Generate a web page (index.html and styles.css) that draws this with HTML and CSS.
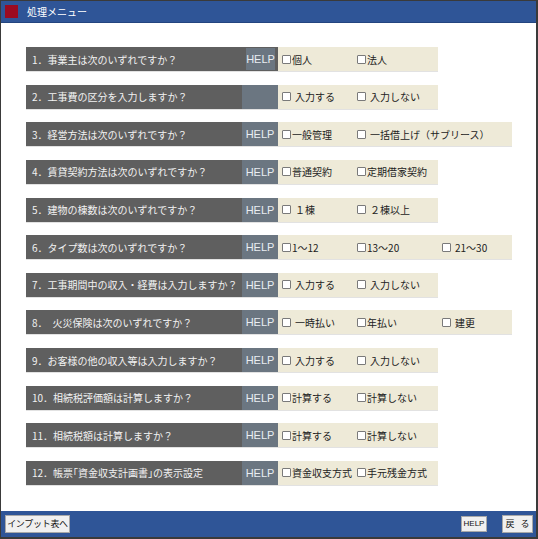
FILE: index.html
```html
<!DOCTYPE html>
<html lang="ja">
<head>
<meta charset="utf-8">
<title>処理メニュー</title>
<link rel="stylesheet" href="styles.css">
</head>
<body>
<div class="window">
  <div class="titlebar"><span class="logo"></span><span class="title">処理メニュー</span></div>
  <div class="content">
    <div class="row"><div class="label">1．事業主は次のいずれですか？</div><div class="help help-dark"><span class="help-btn">HELP</span></div><div class="opts"><span class="opt o1"><i class="cb"></i>個人</span><span class="opt o2"><i class="cb"></i>法人</span></div></div>
    <div class="row"><div class="label">2．工事費の区分を入力しますか？</div><div class="help"></div><div class="opts"><span class="opt o1"><i class="cb sp"></i>入力する</span><span class="opt o2"><i class="cb sp"></i>入力しない</span></div></div>
    <div class="row"><div class="label">3．経営方法は次のいずれですか？</div><div class="help">HELP</div><div class="opts wide"><span class="opt o1"><i class="cb"></i>一般管理</span><span class="opt"><i class="cb sp"></i>一括借上げ（サブリース）</span></div></div>
    <div class="row"><div class="label">4．賃貸契約方法は次のいずれですか？</div><div class="help">HELP</div><div class="opts"><span class="opt o1"><i class="cb"></i>普通契約</span><span class="opt o2"><i class="cb"></i>定期借家契約</span></div></div>
    <div class="row"><div class="label">5．建物の棟数は次のいずれですか？</div><div class="help">HELP</div><div class="opts"><span class="opt o1"><i class="cb sp"></i>１棟</span><span class="opt o2"><i class="cb sp"></i>２棟以上</span></div></div>
    <div class="row"><div class="label">6．タイプ数は次のいずれですか？</div><div class="help">HELP</div><div class="opts wide"><span class="opt o1"><i class="cb"></i>1～12</span><span class="opt o2"><i class="cb"></i>13～20</span><span class="opt"><i class="cb sp"></i>21～30</span></div></div>
    <div class="row"><div class="label">7．工事期間中の収入・経費は入力しますか？</div><div class="help">HELP</div><div class="opts"><span class="opt o1"><i class="cb sp"></i>入力する</span><span class="opt o2"><i class="cb sp"></i>入力しない</span></div></div>
    <div class="row"><div class="label">8．　火災保険は次のいずれですか？</div><div class="help">HELP</div><div class="opts wide"><span class="opt o1"><i class="cb sp"></i>一時払い</span><span class="opt o2"><i class="cb"></i>年払い</span><span class="opt"><i class="cb sp"></i>建更</span></div></div>
    <div class="row"><div class="label">9．お客様の他の収入等は入力しますか？</div><div class="help">HELP</div><div class="opts"><span class="opt o1"><i class="cb sp"></i>入力する</span><span class="opt o2"><i class="cb sp"></i>入力しない</span></div></div>
    <div class="row"><div class="label">10．相続税評価額は計算しますか？</div><div class="help">HELP</div><div class="opts"><span class="opt o1"><i class="cb"></i>計算する</span><span class="opt o2"><i class="cb"></i>計算しない</span></div></div>
    <div class="row"><div class="label">11．相続税額は計算しますか？</div><div class="help">HELP</div><div class="opts"><span class="opt o1"><i class="cb"></i>計算する</span><span class="opt o2"><i class="cb"></i>計算しない</span></div></div>
    <div class="row"><div class="label">12．帳票｢資金収支計画書｣の表示設定</div><div class="help">HELP</div><div class="opts"><span class="opt o1"><i class="cb"></i>資金収支方式</span><span class="opt o2"><i class="cb"></i>手元残金方式</span></div></div>
  </div>
  <div class="footer">
    <button class="btn btn-input">インプット表へ</button>
    <div class="footer-right">
      <button class="btn btn-help">HELP</button>
      <button class="btn btn-back">戻 る</button>
    </div>
  </div>
</div>
</body>
</html>
```

FILE: styles.css
```css
html, body {
  margin: 0;
  padding: 0;
  background: #ffffff;
}
body {
  font-family: "Noto Sans CJK JP", "Noto Sans", sans-serif;
}
.window {
  width: 538px;
  height: 539px;
  box-sizing: border-box;
  border: 1px solid #3a3a3a;
  border-right-width: 2px;
  border-bottom-width: 2px;
  display: flex;
  flex-direction: column;
  background: #ffffff;
}
.titlebar {
  height: 21px;
  flex: none;
  background: #2f5597;
  border-bottom: 1px solid #23457f;
  display: flex;
  align-items: center;
  padding-left: 4px;
}
.logo {
  width: 13px;
  height: 13px;
  background: #9b0b20;
  margin-right: 9px;
}
.title {
  color: #ffffff;
  font-size: 10px;
  line-height: 1;
}
.content {
  flex: 1;
  padding: 24px 0 0 25px;
}
.row {
  display: flex;
  height: 24px;
  margin-bottom: 12.64px;
  border-bottom: 1px solid #e2e2e2;
  width: max-content;
}
.label {
  width: 216px;
  box-sizing: border-box;
  padding-left: 6px;
  background: #5f5f5f;
  color: #f2f2f2;
  font-size: 10px;
  display: flex;
  align-items: center;
  white-space: nowrap;
}
.help {
  width: 36px;
  background: #6b7681;
  color: #e9edf2;
  font-family: "Liberation Sans", Arial, sans-serif;
  font-size: 11px;
  display: flex;
  align-items: center;
  justify-content: center;
}
.help-dark {
  background: #5f5f5f;
  justify-content: flex-start;
  padding-left: 4px;
  width: 32px;
}
.help-btn {
  background: #6b7681;
  height: 22px;
  width: 29px;
  display: flex;
  align-items: center;
  justify-content: center;
}
.opts {
  width: 160px;
  box-sizing: border-box;
  padding-left: 4px;
  background: #eeead8;
  display: flex;
  align-items: center;
  font-size: 10px;
  color: #222222;
  white-space: nowrap;
}
.opts.wide {
  width: 234px;
}
.opt {
  display: flex;
  align-items: center;
}
.o1 {
  width: 75px;
  flex: none;
}
.o2 {
  width: 85px;
  flex: none;
}
.cb {
  display: inline-block;
  width: 7px;
  height: 7px;
  border: 1px solid #7a7a7a;
  border-radius: 1px;
  background: #ffffff;
  margin-right: 1px;
  flex: none;
}
.cb.sp {
  margin-right: 4px;
}
.footer {
  height: 26px;
  flex: none;
  background: #2f5597;
  display: flex;
  align-items: center;
  justify-content: space-between;
  padding: 0 3px 0 4px;
}
.footer-right {
  display: flex;
  gap: 15px;
  align-items: center;
}
.btn {
  margin: 0;
  padding: 0;
  height: 18px;
  background: #f0f0f0;
  border: 1px solid #a8a8a8;
  border-radius: 0;
  color: #111111;
  font-family: "Noto Sans CJK JP", sans-serif;
  font-size: 9px;
  line-height: 16px;
  white-space: nowrap;
  text-align: center;
}
.btn-input {
  width: 65px;
  letter-spacing: -0.3px;
}
.btn-help {
  width: 26px;
  height: 16px;
  font-family: "Liberation Sans", Arial, sans-serif;
  font-size: 8px;
  line-height: 14px;
}
.btn-back {
  width: 31px;
  word-spacing: 4px;
}
```
